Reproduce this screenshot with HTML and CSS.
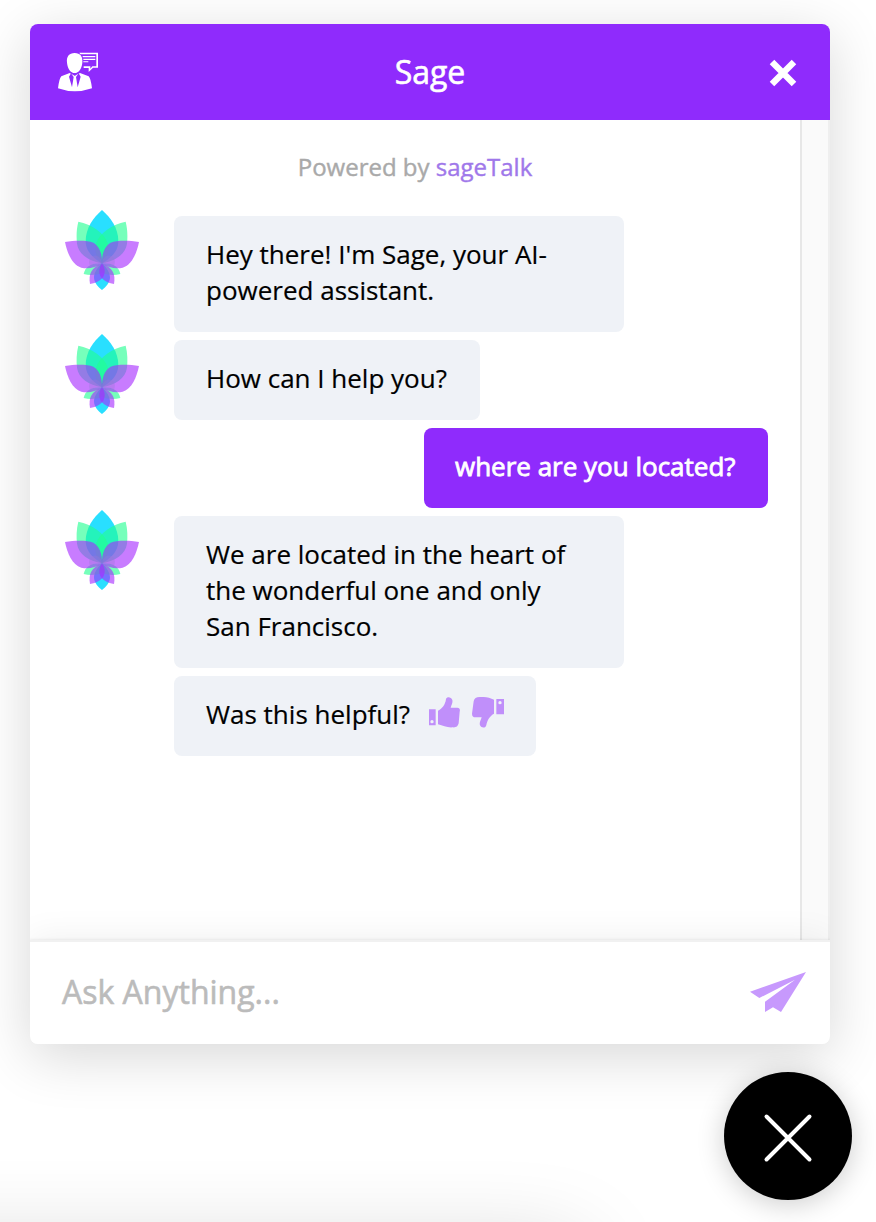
FILE: index.html
```html
<!DOCTYPE html>
<html lang="en">
<head>
<meta charset="utf-8">
<title>Sage</title>
<link rel="stylesheet" href="styles.css">
</head>
<body>
<svg width="0" height="0" class="defs" aria-hidden="true">
  <symbol id="lotus" viewBox="30 30 222 240">
    <path fill="#29dfff" d="M141 30C116 52 92 83 92 124c0 32 26 53 49 66 23-13 49-34 49-66 0-41-24-72-49-94Z"/>
    <path fill="#29dfff" d="M141 188c-12 14-24 28-24 44 0 16 12 29 24 38 12-9 24-22 24-38 0-16-12-30-24-44Z"/>
    <g fill="#22ff91" fill-opacity=".62">
      <path d="M70 65c-6 23-6 47-4 66 4 32 36 52 75 59 18-17 24-38 17-61-9-30-48-56-88-64Z"/>
      <path d="M212 65c6 23 6 47 4 66-4 32-36 52-75 59-18-17-24-38-17-61 9-30 48-56 88-64Z"/>
      <path d="M86 222c4-22 24-35 55-32 2 12 2 22-2 30-15 5-35 7-53 2Z"/>
      <path d="M196 222c-4-22-24-35-55-32-2 12-2 22 2 30 15 5 35 7 53 2Z"/>
    </g>
    <g fill="#a62cff" fill-opacity=".62">
      <path d="M30 126c30-5 68-5 85 2 18 10 27 34 26 62-20 14-43 18-62 13-28-9-42-43-49-77Z"/>
      <path d="M252 126c-30-5-68-5-85 2-18 10-27 34-26 62 20 14 43 18 62 13 28-9 42-43 49-77Z"/>
      <path d="M105 252c-5-29 3-48 36-62 9 13 11 26 5 38-8 14-22 21-41 24Z"/>
      <path d="M177 252c5-29-3-48-36-62-9 13-11 26-5 38 8 14 22 21 41 24Z"/>
    </g>
    <path fill="#9b78d8" fill-opacity=".35" d="M141 190c-2-18-15-28-28-22-10 5-14 18-8 29 12-7 24-9 36-7Zm0 0c2-18 15-28 28-22 10 5 14 18 8 29-12-7-24-9-36-7Z"/>
  </symbol>
</svg>
<div class="stage">
  <div class="glow"></div>
  <main class="chat">
    <header class="head">
      <svg class="agent" viewBox="0 0 120 120" fill="#fff">
        <path d="M50 3c17 0 25 11 23 29-2 18-11 31-23 31S29 50 27 32C25 14 33 3 50 3Z"/>
        <path d="M35 63 10 73Q4 78 0 109q50 18 102 0-4-31-10-36L66 63 50 71Z"/>
        <path fill="#8f2bfc" d="m39 64 8 11-5 31-9-32Zm23 0-8 11 5 31 9-32ZM45 63h11l-3 7h-5Z"/>
        <path d="M64 2h56v45h-15L92 60V48H77v-5h20v7l6-7h12V7H67Z"/>
        <path d="M74 12h38v4H74Zm2 8h36v4H76Zm0 8h15v3H76Z"/>
      </svg>
      <h1 class="title">Sage</h1>
      <svg class="close" viewBox="0 0 28 28"><path d="m3 3 22 22M25 3 3 25" stroke="#fff" stroke-width="6.4"/></svg>
    </header>
    <div class="body">
      <section class="log">
        <p class="powered">Powered by <span class="brand">sageTalk</span></p>
        <div class="row"><svg class="avatar"><use href="#lotus"/></svg><p class="bubble">Hey there! I'm Sage, your AI-<br>powered assistant.</p></div>
        <div class="row"><svg class="avatar"><use href="#lotus"/></svg><p class="bubble short">How can I help you?</p></div>
        <div class="row mine"><p class="bubble user">where are you located?</p></div>
        <div class="row"><svg class="avatar"><use href="#lotus"/></svg><p class="bubble">We are located in the heart of<br>the wonderful one and only<br>San Francisco.</p></div>
        <div class="row follow"><div class="bubble ask"><span>Was this helpful?</span>
          <svg class="thumbs" viewBox="27 35 228 93" fill="#c08ffa">
            <path fill-rule="evenodd" d="M27 72h20v48H27Zm9 32a5 5 0 1 0 0 10 5 5 0 0 0 0-10Z"/>
            <path d="M54 76c11-5 22-17 24-35 2-7 15-8 19 3 2 8-3 16-5 23h20c7 0 9 6 7 12l-3 35c-2 10-9 13-18 12-17 1-29-4-44-9Z"/>
            <path fill-rule="evenodd" d="M229 41h23v46h-23Zm11 6a5 5 0 1 0 0 10 5 5 0 0 0 0-10Z"/>
            <path d="M222 43c-13-6-27-9-43-8-10 0-17 4-18 13l-5 37c0 8 4 11 10 11h19c-2 8-8 16-5 24 5 10 18 8 19-1 3-15 11-28 23-34Z"/>
          </svg></div></div>
      </section>
      <div class="track"></div>
    </div>
    <footer class="compose">
      <span class="hint">Ask Anything...</span>
      <svg class="send" viewBox="30 36 168 120" fill="#c799fd"><path d="M198 36 30 95l28 19 107-55-90 66v31l24-14 24 14Z"/></svg>
    </footer>
  </main>
  <div class="launcher"><svg viewBox="0 0 128 128"><path d="m42.500 44.500 43 43m0-43-43 43" stroke="#fff" stroke-width="4" stroke-linecap="round"/></svg></div>
</div>
</body>
</html>
```
FILE: styles.css
```css
* { box-sizing: border-box; }
body { margin: 0; background: #fff; font-family: "Open Sans", "Noto Sans", sans-serif; color: #000; }
h1, p { margin: 0; font-weight: 400; }
svg { display: block; flex: none; }
.defs { position: absolute; }
.stage { position: relative; height: 1222px; padding: 24px 24px 0 30px; overflow: hidden; }
.glow { position: absolute; left: -150px; top: 1248px; width: 730px; height: 200px; box-shadow: 0 0 90px rgba(0,0,0,.18); }
.chat { position: relative; display: flex; flex-direction: column; width: 800px; height: 1020px; border-radius: 8px; overflow: hidden; box-shadow: 0 12px 56px rgba(0,0,0,.16); background: #fff; }
.head { display: flex; align-items: center; justify-content: space-between; height: 96px; padding: 0 33px 0 28px; background: #8f2bfc; }
.agent { width: 40px; height: 40px; overflow: visible; }
.title { font-size: 32px; line-height: 44px; margin: 0 0 0 -7px; -webkit-text-stroke: .6px #fff; color: #fff; }
.close { width: 28px; height: 28px; margin-top: 2px; }
.body { display: flex; height: 820px; }
.log { width: 770px; padding: 30px 32px 0; display: flex; flex-direction: column; gap: 8px; }
.powered { text-align: center; font-size: 24px; line-height: 34px; height: 58px; color: #a9a9a9; -webkit-text-stroke: .4px; }
.brand { color: #9f78ea; }
.row { display: flex; align-items: flex-start; }
.avatar { width: 74px; height: 80px; margin: -6px 35px -10px 3px; }
.bubble { width: 450px; padding: 20px 32px 24px; border-radius: 8px; background: #eff2f7; font-size: 26px; line-height: 36px; white-space: nowrap; -webkit-text-stroke: .2px; }
.short { width: 306px; }
.mine { justify-content: flex-end; }
.user { width: 344px; padding-left: 31px; background: #8f2bfc; color: #fff; -webkit-text-stroke: .8px; }
.follow { padding-left: 112px; }
.ask { display: flex; justify-content: space-between; width: 362px; padding-right: 31px; }
.thumbs { width: 76px; height: 31px; margin-top: 1px; }
.track { width: 30px; border-left: 2px solid #e7e7e7; border-right: 2px solid #efefef; background: #fafafa; }
.compose { position: relative; display: flex; justify-content: space-between; align-items: center; height: 104px; padding: 0 24px 2px 32px; background: #fff; border-top: 2px solid #f1f1f1; box-shadow: 0 -1px 2px rgba(0,0,0,.06), 0 -4px 32px rgba(0,0,0,.06); }
.hint { font-size: 32px; color: #bbb; margin-top: -2px; -webkit-text-stroke: .6px; }
.send { width: 56px; height: 40px; }
.launcher { position: absolute; left: 724px; top: 1072px; width: 128px; height: 128px; border-radius: 50%; background: #000; box-shadow: 0 4px 28px rgba(0,0,0,.2); }
```
